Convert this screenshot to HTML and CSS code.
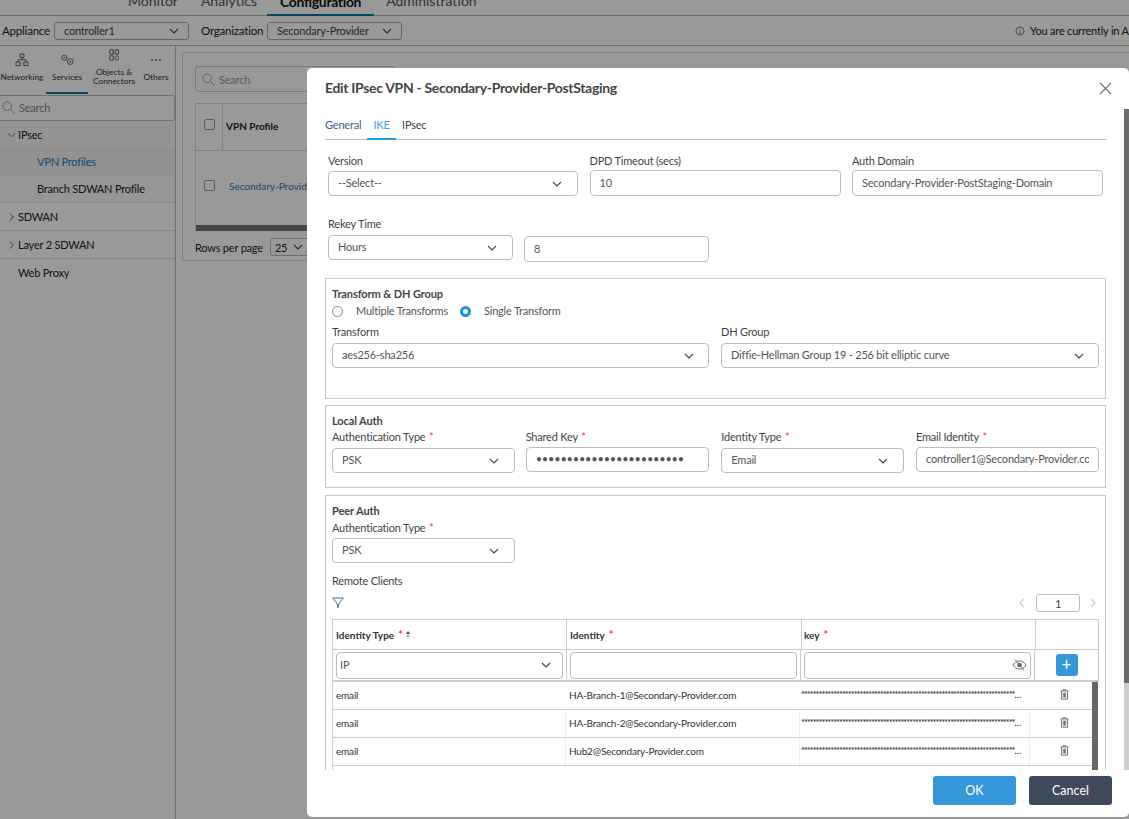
FILE: index.html
```html
<!DOCTYPE html>
<html lang="en">
<head>
<meta charset="utf-8">
<title>Edit IPsec VPN</title>
<link rel="stylesheet" href="styles.css">
</head>
<body>
<svg class="defs" width="0" height="0" aria-hidden="true">
  <symbol id="chev" viewBox="0 0 10 6"><path d="M1 1l4 4 4-4" fill="none" stroke="currentColor" stroke-width="1.1"/></symbol>
  <symbol id="trash" viewBox="0 0 10 12"><path d="M3.5 1.8V.7h3v1.1M.6 2h8.8M1.6 2.2v9h6.8v-9M3.7 4v5.5M5 4v5.5M6.3 4v5.5" fill="none" stroke="currentColor" stroke-width=".9"/></symbol>
</svg>

<div class="app">
  <nav class="topnav">
    <span class="topnav-item">Monitor</span>
    <span class="topnav-item">Analytics</span>
    <span class="topnav-item topnav-active">Configuration</span>
    <span class="topnav-item">Administration</span>
  </nav>
  <div class="context">
    <span class="context-label">Appliance</span>
    <div class="context-select ctx-first">controller1<svg class="chev"><use href="#chev"/></svg></div>
    <span class="context-label org-label">Organization</span>
    <div class="context-select">Secondary-Provider<svg class="chev"><use href="#chev"/></svg></div>
    <div class="context-info">
      <svg class="info-icon" viewBox="0 0 10 10"><circle cx="5" cy="5" r="4" fill="none" stroke="currentColor" stroke-width=".8"/><path d="M5 4.400v3M4.200 7.400h1.600M5 2.500v1" stroke="currentColor" stroke-width=".8"/></svg>
      <span>You are currently in Appliance Context</span>
    </div>
  </div>
  <div class="workspace">
    <aside class="sidebar">
      <div class="side-tabs">
        <div class="side-tab tab-net">
          <svg class="side-icon" viewBox="0 0 14 14"><path d="M5 1h4v3.400H5zM1 9h4.200v3.600H1zM8.800 9H13v3.600H8.800zM7 4.400v2.400M3 9V6.800h8V9" fill="none" stroke="currentColor" stroke-width=".9"/></svg>
          <span class="side-tab-label">Networking</span>
        </div>
        <div class="side-tab tab-svc tab-on">
          <svg class="side-icon" viewBox="0 0 14 14"><circle cx="4.400" cy="4.600" r="2.600" fill="none" stroke="currentColor" stroke-width=".9"/><circle cx="4.400" cy="4.600" r=".8" fill="currentColor"/><circle cx="10.200" cy="8.600" r="2.900" fill="none" stroke="currentColor" stroke-width=".9"/><circle cx="10.200" cy="8.600" r=".9" fill="currentColor"/></svg>
          <span class="side-tab-label">Services</span>
        </div>
        <div class="side-tab tab-obj">
          <svg class="side-icon" viewBox="0 0 14 14"><path d="M2 1h4v5H2zM8.200 1h4v5h-4zM2 8h4v5H2z" fill="none" stroke="currentColor" stroke-width="1"/><rect x="8.200" y="8" width="4" height="5" rx="2" fill="none" stroke="currentColor" stroke-width="1"/></svg>
          <span class="side-tab-label">Objects &amp;<br>Connectors</span>
        </div>
        <div class="side-tab tab-oth">
          <svg class="side-icon" viewBox="0 0 14 14"><circle cx="3" cy="7" r=".9" fill="currentColor"/><circle cx="7" cy="7" r=".9" fill="currentColor"/><circle cx="11" cy="7" r=".9" fill="currentColor"/></svg>
          <span class="side-tab-label">Others</span>
        </div>
      </div>
      <div class="side-search">
        <svg class="search-icon" viewBox="0 0 14 14"><circle cx="5.600" cy="5.600" r="4.600" fill="none" stroke="currentColor" stroke-width="1"/><path d="M9 9l4.400 4.400" stroke="currentColor" stroke-width="1"/></svg>
        <span>Search</span>
      </div>
      <div class="tree-row tree-open"><svg class="tree-chev"><use href="#chev"/></svg>IPsec</div>
      <div class="tree-sub tree-sel">VPN Profiles</div>
      <div class="tree-sub tree-last">Branch SDWAN Profile</div>
      <div class="tree-row tree-line"><svg class="tree-chev tree-chev-r"><use href="#chev"/></svg>SDWAN</div>
      <div class="tree-row tree-line"><svg class="tree-chev tree-chev-r"><use href="#chev"/></svg>Layer 2 SDWAN</div>
      <div class="tree-row tree-plain">Web Proxy</div>
    </aside>
    <main class="main">
      <section class="panel">
        <div class="panel-search">
          <svg class="search-icon" viewBox="0 0 14 14"><circle cx="5.600" cy="5.600" r="4.600" fill="none" stroke="currentColor" stroke-width="1"/><path d="M9 9l4.400 4.400" stroke="currentColor" stroke-width="1"/></svg>
          <span>Search</span>
        </div>
        <div class="grid-table">
          <div class="grid-head">
            <div class="grid-check"><span class="checkbox"></span></div>
            <div class="grid-title">VPN Profile</div>
          </div>
          <div class="grid-row">
            <div class="grid-check-b"><span class="checkbox"></span></div>
            <div class="grid-link">Secondary-Provider-PostStaging</div>
          </div>
          <div class="grid-scroll"></div>
        </div>
        <div class="pager">
          <span>Rows per page</span>
          <div class="pager-select">25<svg class="chev"><use href="#chev"/></svg></div>
        </div>
      </section>
    </main>
  </div>
</div>

<div class="scrim"></div>

<div class="modal">
  <header class="modal-head">
    <h1 class="modal-title">Edit IPsec VPN - Secondary-Provider-PostStaging</h1>
    <svg class="close" viewBox="0 0 14 14"><path d="M1 1l12 12M13 1L1 13" stroke="currentColor" stroke-width="1.200" fill="none"/></svg>
  </header>
  <div class="modal-body">
    <div class="tabs">
      <span class="tab tab-general">General</span>
      <span class="tab tab-active">IKE</span>
      <span class="tab">IPsec</span>
    </div>

    <div class="form-row row-top">
      <div class="field"><label class="lbl">Version</label><div class="ctl sel">--Select--<svg class="chev"><use href="#chev"/></svg></div></div>
      <div class="field"><label class="lbl">DPD Timeout (secs)</label><div class="ctl inp inp-up">10</div></div>
      <div class="field"><label class="lbl">Auth Domain</label><div class="ctl inp inp-up">Secondary-Provider-PostStaging-Domain</div></div>
    </div>

    <div class="form-row row-rekey">
      <div class="field"><label class="lbl lbl-far">Rekey Time</label><div class="ctl sel">Hours<svg class="chev"><use href="#chev"/></svg></div></div>
      <div class="field field-end"><div class="ctl inp">8</div></div>
    </div>

    <section class="box box-transform">
      <div class="box-title">Transform &amp; DH Group</div>
      <div class="radios">
        <span class="radio"></span><span class="radio-label">Multiple Transforms</span>
        <span class="radio radio-on"></span><span class="radio-label">Single Transform</span>
      </div>
      <div class="two-col">
        <div class="field"><label class="lbl">Transform</label><div class="ctl sel sel-wide">aes256-sha256<svg class="chev"><use href="#chev"/></svg></div></div>
        <div class="field"><label class="lbl">DH Group</label><div class="ctl sel sel-wide">Diffie-Hellman Group 19 - 256 bit elliptic curve<svg class="chev"><use href="#chev"/></svg></div></div>
      </div>
    </section>

    <section class="box box-local">
      <div class="box-title">Local Auth</div>
      <div class="four-col">
        <div class="field"><label class="lbl lbl-tight">Authentication Type <em class="req">*</em></label><div class="ctl sel">PSK<svg class="chev"><use href="#chev"/></svg></div></div>
        <div class="field field-key"><label class="lbl lbl-tight">Shared Key <em class="req">*</em></label><div class="ctl inp inp-key">&#8226;&#8226;&#8226;&#8226;&#8226;&#8226;&#8226;&#8226;&#8226;&#8226;&#8226;&#8226;&#8226;&#8226;&#8226;&#8226;&#8226;&#8226;&#8226;&#8226;&#8226;&#8226;&#8226;&#8226;</div></div>
        <div class="field"><label class="lbl lbl-tight">Identity Type <em class="req">*</em></label><div class="ctl sel">Email<svg class="chev"><use href="#chev"/></svg></div></div>
        <div class="field"><label class="lbl lbl-tight">Email Identity <em class="req">*</em></label><div class="ctl inp inp-key inp-clip"><span class="clip-text">controller1@Secondary-Provider.com</span></div></div>
      </div>
    </section>

    <section class="box box-peer">
      <div class="box-title">Peer Auth</div>
      <label class="lbl lbl-peer">Authentication Type <em class="req">*</em></label>
      <div class="ctl sel sel-peer">PSK<svg class="chev"><use href="#chev"/></svg></div>
      <div class="lbl remote">Remote Clients</div>
      <div class="toolbar">
        <svg class="filter" viewBox="0 0 12 12"><path d="M.7 1h10.600L7 6.400l-1 4.400-1-4.400z" fill="none" stroke="currentColor" stroke-width=".9"/></svg>
        <div class="pagination">
          <svg class="page-arrow page-prev"><use href="#chev"/></svg>
          <div class="page-num">1</div>
          <svg class="page-arrow page-next"><use href="#chev"/></svg>
        </div>
      </div>
      <div class="clients">
        <div class="clients-head">
          <div class="th th-1">Identity Type <em class="req">*</em><span class="sort"><i class="sort-up"></i><i class="sort-down"></i></span></div>
          <div class="th th-2">Identity <em class="req">*</em></div>
          <div class="th th-3">key <em class="req">*</em></div>
          <div class="th th-4"></div>
        </div>
        <div class="clients-add">
          <div class="add-cell cell-1"><div class="add-ctl add-sel">IP<svg class="chev"><use href="#chev"/></svg></div></div>
          <div class="add-cell cell-2"><div class="add-ctl"></div></div>
          <div class="add-cell cell-3"><div class="add-ctl add-key">
            <svg class="eye" viewBox="0 0 16 14"><path d="M1 7c2-3 4.300-4.300 7-4.300S13 4 15 7c-2 3-4.300 4.300-7 4.300S3 10 1 7z" fill="none" stroke="currentColor" stroke-width="1"/><circle cx="8" cy="7" r="2.500" fill="currentColor"/><path d="M3 1l10 12" stroke="currentColor" stroke-width="1"/></svg>
          </div></div>
          <div class="add-cell cell-4"><button class="plus" type="button">+</button></div>
        </div>
        <div class="clients-data">
          <div class="rows">
            <div class="row row-first">
              <div class="td td-1">email</div><div class="td td-2">HA-Branch-1@Secondary-Provider.com</div><div class="td td-3"><span class="stars">****************************************************************************************************</span></div><div class="td td-4"><svg class="trash"><use href="#trash"/></svg></div>
            </div>
            <div class="row">
              <div class="td td-1">email</div><div class="td td-2">HA-Branch-2@Secondary-Provider.com</div><div class="td td-3"><span class="stars">****************************************************************************************************</span></div><div class="td td-4"><svg class="trash"><use href="#trash"/></svg></div>
            </div>
            <div class="row">
              <div class="td td-1">email</div><div class="td td-2">Hub2@Secondary-Provider.com</div><div class="td td-3"><span class="stars">****************************************************************************************************</span></div><div class="td td-4"><svg class="trash"><use href="#trash"/></svg></div>
            </div>
            <div class="row">
              <div class="td td-1"></div><div class="td td-2"></div><div class="td td-3"></div><div class="td td-4"></div>
            </div>
          </div>
          <div class="rows-scroll"></div>
        </div>
      </div>
    </section>
    <div class="body-scroll"></div>
  </div>
  <footer class="modal-foot">
    <button class="btn btn-ok" type="button">OK</button>
    <button class="btn btn-cancel" type="button">Cancel</button>
  </footer>
</div>
</body>
</html>
```
FILE: styles.css
```css
* { box-sizing: border-box; }
html, body { height: 100%; }
body {
  margin: 0;
  overflow: hidden;
  background: #fff;
  color: #222;
  font-family: Lato, "Open Sans", sans-serif;
  font-size: 11px;
  letter-spacing: -.2px;
}
.defs { position: absolute; }
.chev { width: 10px; height: 6px; flex: none; margin-left: auto; color: #444; }

.app { height: 100%; display: flex; flex-direction: column; }
.topnav {
  height: 16px;
  flex: none;
  display: flex;
  align-items: flex-end;
  border-bottom: 1px solid #bdbdbd;
  padding-left: 113px;
  font-size: 14px;
  letter-spacing: 0;
  color: #555;
}
.topnav-item { padding: 0 15px 5px; line-height: 18px; white-space: nowrap; }
.topnav-item:nth-child(2) { padding: 0 10px 5px 8px; }
.topnav-active {
  padding: 0 13px 5px;
  color: #111;
  font-weight: 700;
  letter-spacing: -.35px;
  box-shadow: inset 0 -2px 0 #0e77ad;
  margin-bottom: -1px;
}
.topnav-item:last-child { padding-left: 12px; }

.context {
  height: 30px;
  flex: none;
  display: flex;
  align-items: center;
  padding-left: 2px;
  border-bottom: 1px solid #bdbdbd;
  white-space: nowrap;
}
.context-label { font-size: 11.500px; flex: none; width: 46px; }
.org-label { width: 60px; }
.context-select {
  width: 135px;
  height: 18px;
  flex: none;
  display: flex;
  align-items: center;
  padding: 0 9px;
  margin-left: 6px;
  border: 1px solid #aaa;
  border-radius: 3px;
  color: #444;
}
.ctx-first { margin-right: 12px; }
.context-info {
  display: flex;
  align-items: center;
  gap: 5px;
  margin-left: 613px;
  flex: none;
}
.info-icon { width: 10px; height: 10px; color: #666; }

.workspace { flex: 1; display: flex; min-height: 0; }
.sidebar { width: 176px; flex: none; border-right: 1px solid #bdbdbd; }
.side-tabs { height: 49px; position: relative; }
.side-tab {
  position: absolute;
  top: 0;
  height: 49px;
  display: flex;
  flex-direction: column;
  align-items: center;
  color: #333;
}
.tab-net { left: 1px; width: 42px; }
.tab-svc { left: 46px; width: 42px; }
.tab-obj { left: 90px; width: 48px; }
.tab-oth { left: 140px; width: 32px; }
.tab-on { box-shadow: inset 0 -2px 0 #0e77ad; height: 48px; }
.side-icon { width: 14px; height: 14px; margin-top: 7px; color: #555; flex: none; }
.tab-obj .side-icon { width: 12px; height: 12px; margin-top: 3px; }
.side-tab-label { font-size: 8.300px; letter-spacing: 0; line-height: 9px; text-align: center; margin-top: 6px; white-space: nowrap; }
.tab-obj .side-tab-label { margin-top: 7px; }

.side-search {
  height: 26px;
  display: flex;
  align-items: center;
  gap: 4px;
  padding: 0 0 2px 2px;
  border: 1px solid #bdbdbd;
  border-left: 0;
  border-radius: 0 3px 3px 0;
  color: #888;
}
.search-icon { width: 13px; height: 13px; color: #999; flex: none; }

.tree-row {
  height: 28px;
  display: flex;
  align-items: center;
  color: #222;
  padding-left: 18px;
  position: relative;
}
.tree-chev { position: absolute; left: 7px; top: 11px; width: 9px; height: 6px; color: #666; }
.tree-chev-r { transform: rotate(-90deg); }
.tree-open { background: #f7f7f7; height: 27px; }
.tree-sub { height: 27px; display: flex; align-items: center; padding-left: 37px; color: #222; background: #fafafa; }
.tree-sel { color: #1b7ebd; background: #f2f2f2; }
.tree-last { height: 28px; border-bottom: 1px solid #ddd; }
.tree-line { border-bottom: 1px solid #ddd; }
.tree-plain { height: 28px; padding-bottom: 2px; }

.main { flex: 1; min-width: 0; padding: 6px 0 0 6px; }
.panel { height: 209px; border: 1px solid #d0d0d0; border-right: 0; padding: 13px 0 0 12px; border-radius: 2px 0 0 2px; }
.panel-search {
  width: 200px;
  height: 26px;
  display: flex;
  align-items: center;
  gap: 4px;
  padding-left: 6px;
  border: 1px solid #c8c8c8;
  border-radius: 3px;
  color: #999;
}
.grid-table { margin-top: 11px; width: 300px; border: 1px solid #d8d8d8; border-bottom: 0; }
.grid-head { height: 47px; display: flex; border-bottom: 1px solid #d8d8d8; }
.grid-check { width: 27px; padding-bottom: 6px; border-right: 1px solid #d8d8d8; display: flex; align-items: center; justify-content: center; }
.grid-title { padding: 0 0 3px 3px; display: flex; align-items: center; font-size: 10px; font-weight: 700; letter-spacing: 0; }
.grid-row { height: 74px; display: flex; align-items: center; padding-bottom: 6px; }
.grid-check-b { width: 27px; display: flex; justify-content: center; }
.grid-link { padding: 2px 0 0 6px; color: #1b7ebd; font-size: 10px; letter-spacing: 0; white-space: nowrap; }
.checkbox { width: 11px; height: 11px; border: 1px solid #999; border-radius: 2px; display: block; }
.grid-scroll { height: 6px; background: #777; }
.pager { margin-top: 7px; display: flex; align-items: center; gap: 7px; }
.pager-select { width: 60px; height: 18px; border: 1px solid #bbb; border-radius: 3px; display: flex; align-items: center; padding: 0 4px; gap: 6px; }
.pager-select .chev { margin-left: 0; }

.scrim { position: fixed; inset: 0; background: rgba(0, 0, 0, .4); }

.modal {
  position: fixed;
  left: 307px;
  top: 68px;
  width: 822px;
  height: 749px;
  background: #fff;
  border-radius: 5px;
  display: flex;
  flex-direction: column;
  color: #444;
}
.modal-head { height: 41px; flex: none; position: relative; padding: 11px 0 0 18px; }
.modal-title { margin: 0; font-size: 14px; letter-spacing: -.33px; line-height: 18px; font-weight: 700; color: #444; white-space: nowrap; }
.close { position: absolute; right: 17px; top: 14px; width: 13px; height: 13px; color: #666; }

.modal-body { flex: 1; min-height: 0; overflow: hidden; position: relative; padding: 0 23px 0 18px; }
.body-scroll {
  position: absolute;
  top: 0;
  right: 0;
  width: 5px;
  height: 100%;
  background: linear-gradient(#6b6b6b 0, #6b6b6b 574px, #cdcdcd 574px);
}

.tabs { height: 31px; display: flex; border-bottom: 1px solid #bbb; }
.tab { height: 30px; padding: 10px 6px 0; color: #444; line-height: 12px; }
.tab-general { width: 42px; padding-left: 0; padding-right: 0; color: #3c5f7d; }
.tab-active { width: 29px; padding: 10px 0 0; text-align: center; color: #3ba0e6; box-shadow: 0 1px 0 #1c9be6, inset 0 -1px 0 #1c9be6; }

.form-row { display: grid; padding-left: 3px; column-gap: 11px; }
.row-top { margin-top: 14px; grid-template-columns: 250px 251px 251px; column-gap: 11.500px; }
.row-rekey { margin-top: 21px; grid-template-columns: 185px 185px; }
.field { display: flex; flex-direction: column; min-width: 0; }
.field-end { justify-content: flex-end; }
.lbl { display: block; line-height: 14px; height: 14px; margin-bottom: 3px; color: #444; white-space: nowrap; }
.lbl-far { margin-bottom: 4px; }
.req { color: #e8405a; font-style: normal; margin-left: 1px; }

.ctl {
  height: 25px;
  display: flex;
  align-items: center;
  border: 1px solid #bdbdbd;
  border-radius: 4px;
  padding: 0 15px 2px 9px;
  color: #555;
  background: #fff;
  white-space: nowrap;
}
.ctl .chev { position: relative; top: 1px; }
.sel-wide .chev { margin-right: -1px; }
.inp { height: 26px; }
.inp-up { margin-top: -1px; }
.row-rekey .inp { margin-bottom: -2px; }

.box { border: 1px solid #c8c8c8; padding: 8px 6px 0; }
.box-transform { margin-top: 18px; height: 121px; }
.box-local { margin-top: 6px; height: 83px; }
.box-peer { margin-top: 7px; height: 400px; }
.box-title { line-height: 14px; font-weight: 700; letter-spacing: -.1px; color: #444; }
.radios { display: flex; align-items: center; margin-top: 3px; height: 14px; }
.radio { width: 11px; height: 11px; border: 1px solid #888; border-radius: 50%; flex: none; }
.radio-on { border: 3.500px solid #1593e0; }
.radio-label { margin: 0 12px 0 13px; padding-bottom: 2px; color: #555; white-space: nowrap; }
.two-col { margin-top: 7px; display: grid; grid-template-columns: 377px 378px; column-gap: 12px; }
.two-col .lbl { margin-bottom: 4px; }
.four-col { margin-top: 2px; display: grid; grid-template-columns: repeat(4, 183px); justify-content: space-between; }
.four-col .lbl { margin-bottom: 4px; }
.field-key { margin: 0 1px 0 -1px; }
.inp-key { height: 25px; margin-top: -1px; margin-bottom: 1px; }
.inp-clip { padding-right: 9px; }
.clip-text { display: block; flex: 1; min-width: 0; overflow: hidden; }
.lbl-peer { margin: 3px 0 3px; }
.sel-peer { width: 183px; }
.remote { margin: 11px 0 0; }
.toolbar { height: 18px; margin-top: 6px; display: flex; align-items: center; justify-content: space-between; padding-right: 1px; }
.filter { width: 12px; height: 12px; color: #3c5f7d; }
.pagination { display: flex; align-items: center; gap: 8px; }
.page-arrow { width: 10px; height: 6px; color: #ccc; }
.page-prev { transform: rotate(90deg); margin-right: 1px; }
.page-next { transform: rotate(-90deg); }
.page-num { width: 44px; height: 18px; border: 1px solid #bdbdbd; border-radius: 3px; display: flex; align-items: center; justify-content: center; }

.clients { margin-top: 7px; border-left: 1px solid #ccc; font-size: 10px; letter-spacing: 0; color: #333; }
.clients-head {
  height: 31px;
  display: grid;
  grid-template-columns: 234px 235px 234px 62px;
  border: 1px solid #ccc;
  border-left: 0;
}
.th { display: flex; align-items: center; gap: 3px; padding-left: 3px; font-weight: 700; border-right: 1px solid #ccc; white-space: nowrap; }
.th-3 { padding-left: 2px; }
.th-4 { border-right: 0; }
.th .req { font-size: 11px; margin-left: 1px; }
.sort { display: inline-flex; flex-direction: column; gap: 1px; margin-left: 0; }
.sort-up, .sort-down { width: 0; height: 0; border-left: 2.500px solid transparent; border-right: 2.500px solid transparent; }
.sort-up { border-bottom: 3px solid #444; }
.sort-down { border-top: 3px solid #aaa; }

.clients-add {
  height: 32px;
  display: grid;
  grid-template-columns: 234px 234px 234px 64px;
  border-bottom: 2px solid #ccc;
}
.add-cell { border-right: 1px solid #ccc; padding: 2px 3px 0; }
.add-ctl {
  height: 27px;
  border: 1px solid #bdbdbd;
  border-radius: 4px;
  display: flex;
  align-items: center;
  padding: 0 10px 2px 3px;
  font-size: 11px;
  color: #555;
}
.add-sel .chev { margin-right: 1px; }
.add-key { padding-right: 3px; justify-content: flex-end; }
.eye { width: 15px; height: 14px; color: #666; }
.cell-4 { display: flex; justify-content: center; padding: 4px 0 0; }
.plus {
  width: 22px;
  height: 22px;
  border: 0;
  border-radius: 3px;
  background: #3498db;
  color: #fff;
  font: 400 17px/22px Lato, sans-serif;
  padding: 0;
}

.clients-data { display: flex; }
.rows { width: 759px; flex: none; }
.row { height: 28px; display: grid; grid-template-columns: 233px 234px 230px 62px; border-bottom: 1px solid #ccc; align-items: stretch; }
.td { display: flex; align-items: center; padding: 0 0 2px 3px; min-width: 0; font-size: 10px; letter-spacing: -.2px; border-right: 1px solid #f0f0f0; white-space: nowrap; color: #333; }
.row-first .td { border-right: 0; }
.td-3 { padding: 0 7px 2px 1px; }
.td-4 { border-right: 0; justify-content: center; padding: 0 0 2px 6px; }
.stars { display: block; overflow: hidden; text-overflow: ellipsis; width: 100%; font-size: 9px; letter-spacing: -.9px; color: #111; }
.trash { width: 9px; height: 11px; color: #555; }
.rows-scroll { width: 6px; height: 90px; background: #666; flex: none; }

.modal-foot { height: 47px; flex: none; display: flex; justify-content: flex-end; gap: 13px; padding: 6px 17px 0 0; }
.btn {
  width: 83px;
  height: 29px;
  border: 0;
  border-radius: 3px;
  color: #fff;
  font: 400 12.500px Lato, sans-serif;
}
.btn-ok { background: #3498db; }
.btn-cancel { background: #3f4a5a; }
```
